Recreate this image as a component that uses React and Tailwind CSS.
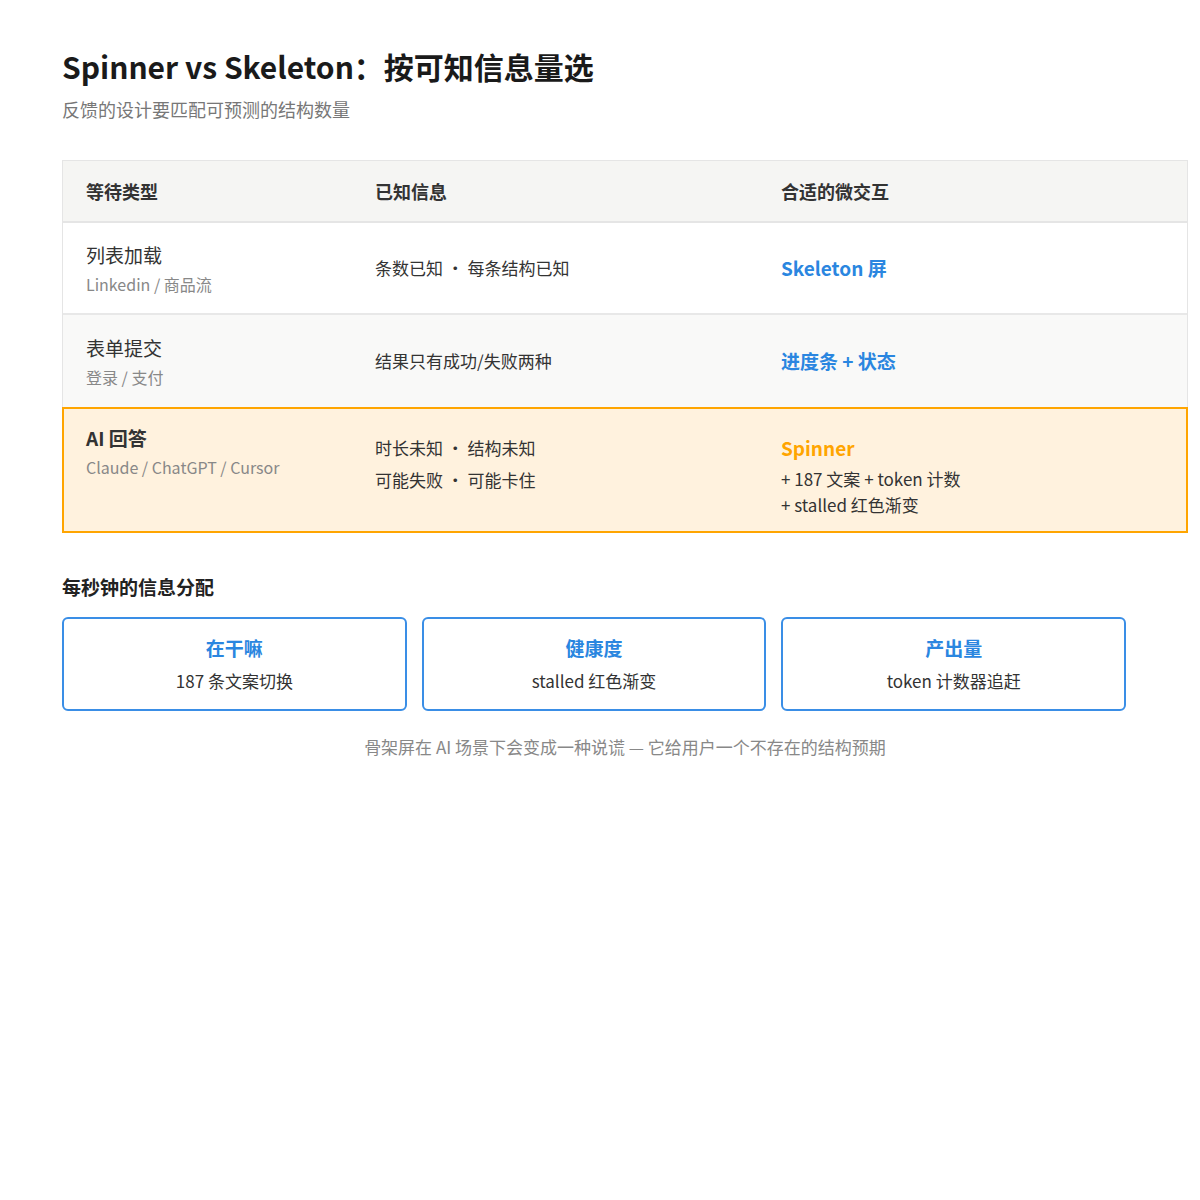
export default function App() {
  const font = { fontFamily: '"Noto Sans CJK SC", "Liberation Sans", sans-serif' };
  return (
    <div className="bg-white min-h-[1200px] pl-[62px] pt-[44px] text-[#333]" style={font}>
      <h1 className="text-[30px] font-semibold leading-[44px] text-[#1a1a1a]">Spinner vs Skeleton：按可知信息量选</h1>
      <p className="mt-[8px] text-[18px] leading-[26px] text-[#777]">反馈的设计要匹配可预测的结构数量</p>
      <div className="mt-[38px] w-[1126px] border border-[#e5e5e5]">
        <div className="grid grid-cols-[289px_406px_1fr] h-[62px] items-center bg-[#f5f5f3] text-[18px] font-semibold text-[#333] border-b-2 border-[#e5e5e5]">
          <div className="pl-[23px]">等待类型</div>
          <div className="pl-[23px]">已知信息</div>
          <div className="pl-[23px]">合适的微交互</div>
        </div>
        <div className="grid grid-cols-[289px_406px_1fr] h-[92px] items-center bg-white border-b-2 border-[#e8e8e8] text-[17px]">
          <div className="pl-[23px]">
            <div className="text-[19px] leading-[26px] text-[#333]">列表加载</div>
            <div className="mt-[5px] text-[16px] leading-[22px] text-[#888]">Linkedin&nbsp;/&nbsp;商品流</div>
          </div>
          <div className="pl-[23px] text-[#333]">条数已知 · 每条结构已知</div>
          <div className="pl-[23px] text-[19px] font-semibold text-[#2a86e0]">Skeleton 屏</div>
        </div>
        <div className="grid grid-cols-[289px_406px_1fr] h-[92px] items-center bg-[#f9f9f8] text-[17px]">
          <div className="pl-[23px]">
            <div className="text-[19px] leading-[26px] text-[#333]">表单提交</div>
            <div className="mt-[5px] text-[16px] leading-[22px] text-[#888]">登录&nbsp;/&nbsp;支付</div>
          </div>
          <div className="pl-[23px] text-[#333]">结果只有成功/失败两种</div>
          <div className="pl-[23px] text-[19px] font-semibold text-[#2a86e0]">进度条 + 状态</div>
        </div>
        <div className="grid grid-cols-[288px_406px_1fr] h-[126px] items-start bg-[#fff2de] border-2 border-[#ffa500] -mx-px -mb-px text-[17px] pt-[16px]">
          <div className="pl-[22px]">
            <div className="text-[19px] leading-[26px] font-semibold text-[#333]">AI 回答</div>
            <div className="mt-[5px] text-[16px] leading-[22px] text-[#888]">Claude&nbsp;/&nbsp;ChatGPT&nbsp;/&nbsp;Cursor</div>
          </div>
          <div className="pl-[23px] pt-[7px] leading-[32px] text-[#333]">
            <div>时长未知 · 结构未知</div>
            <div>可能失败 · 可能卡住</div>
          </div>
          <div className="pl-[23px] pt-[10px] text-[#333]">
            <div className="text-[19px] font-semibold text-[#ffa500] leading-[26px]">Spinner</div>
            <div className="mt-[4px] leading-[28px]">+ 187 文案 + token 计数</div>
            <div className="leading-[24px]">+ stalled 红色渐变</div>
          </div>
        </div>
      </div>
      <h2 className="mt-[40px] text-[19px] font-semibold text-[#222] leading-[28px]">每秒钟的信息分配</h2>
      <div className="mt-[16px] flex gap-[15px] w-[1064px]">
        {[["在干嘛", "187 条文案切换"], ["健康度", "stalled 红色渐变"], ["产出量", "token 计数器追赶"]].map(([t, s]) => (
          <div key={t} className="flex-1 h-[94px] rounded-[6px] border-2 border-[#3a8ee6] flex flex-col items-center justify-center">
            <div className="text-[19px] font-semibold text-[#2a86e0] leading-[26px]">{t}</div>
            <div className="mt-[8px] text-[17px] text-[#333] leading-[24px]">{s}</div>
          </div>
        ))}
      </div>
      <p className="mt-[24px] w-[1126px] text-center text-[17px] leading-[24px] text-[#888]">骨架屏在 AI 场景下会变成一种说谎 — 它给用户一个不存在的结构预期</p>
    </div>
  );
}
